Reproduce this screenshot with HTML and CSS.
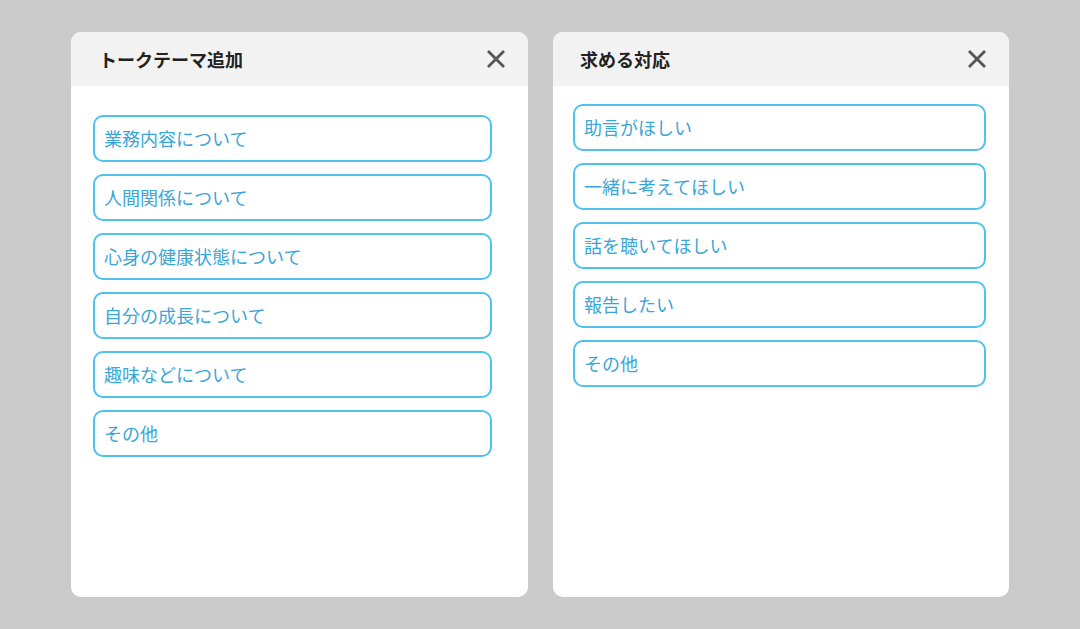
FILE: index.html
```html
<!DOCTYPE html>
<html lang="ja">
<head>
    <meta charset="UTF-8">
    <meta name="viewport" content="width=device-width, initial-scale=1.0">
    <title>トークテーマ追加</title>
    <link rel="stylesheet" href="styles.css">
</head>
<body>
    <div class="wrap">
        <div class="modal modal-theme">
            <div class="modal-head">
                <h2 class="modal-title">トークテーマ追加</h2>
                <button class="close" aria-label="閉じる">
                    <svg width="20" height="20" viewBox="0 0 20 20"><path d="M2 2L18 18M18 2L2 18" stroke="#555" stroke-width="2.8" fill="none"/></svg>
                </button>
            </div>
            <div class="choices">
                <button class="choice">業務内容について</button>
                <button class="choice">人間関係について</button>
                <button class="choice">心身の健康状態について</button>
                <button class="choice">自分の成長について</button>
                <button class="choice">趣味などについて</button>
                <button class="choice">その他</button>
            </div>
        </div>

        <div class="modal modal-reply">
            <div class="modal-head">
                <h2 class="modal-title">求める対応</h2>
                <button class="close" aria-label="閉じる">
                    <svg width="20" height="20" viewBox="0 0 20 20"><path d="M2 2L18 18M18 2L2 18" stroke="#555" stroke-width="2.8" fill="none"/></svg>
                </button>
            </div>
            <div class="choices">
                <button class="choice">助言がほしい</button>
                <button class="choice">一緒に考えてほしい</button>
                <button class="choice">話を聴いてほしい</button>
                <button class="choice">報告したい</button>
                <button class="choice">その他</button>
            </div>
        </div>
    </div>
</body>
</html>
```

FILE: styles.css
```css
*{
    margin: 0;
    padding: 0;
    box-sizing: border-box;
    font-family: "Noto Sans CJK JP", "Noto Sans", sans-serif;
}
body{
    background-color: #cbcbcb;
    height: 629px;
    overflow: hidden;
}
.wrap{
    display: flex;
    gap: 25px;
    padding: 32px 0 0 71px;
}
.modal{
    width: 457px;
    height: 565px;
    background-color: #fff;
    border-radius: 10px;
    overflow: hidden;
}
.modal-reply{
    width: 456px;
}
.modal-head{
    display: flex;
    align-items: center;
    justify-content: space-between;
    height: 54px;
    padding: 0 22px 0 28px;
    background-color: #f2f2f2;
}
.modal-reply .modal-head{
    padding-left: 27px;
}
.modal-title{
    font-size: 18px;
    font-weight: bold;
    color: #222;
}
.close{
    display: flex;
    border: none;
    background: none;
}
.choices{
    display: flex;
    flex-direction: column;
    gap: 12px;
    padding: 29px 36px 0 22px;
}
.modal-reply .choices{
    padding: 18px 23px 0 20px;
}
.choice{
    height: 47px;
    padding: 0 0 2px 9px;
    text-align: left;
    font-size: 18px;
    color: #3aa6d8;
    background-color: #fff;
    border: 2px solid #4ec2ec;
    border-radius: 10px;
}
```
